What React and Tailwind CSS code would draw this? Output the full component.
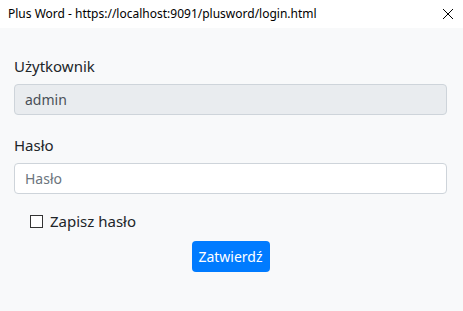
export default function App() {
  return (
    <div className="w-[463px] h-[311px] flex flex-col bg-[#f8f9fa]" style={{ fontFamily: '"Noto Sans", "Open Sans", sans-serif' }}>
      <div className="h-[28px] bg-white flex items-center justify-between pl-[8px] pr-[9px] shrink-0">
        <span className="text-[12px] text-black leading-none">Plus Word - https://localhost:9091/plusword/login.html</span>
        <svg width="12" height="12" viewBox="0 0 12 12" className="text-black">
          <path d="M1 1 L11 11 M11 1 L1 11" stroke="currentColor" strokeWidth="1" fill="none" />
        </svg>
      </div>
      <div className="flex flex-col px-[14px] pr-[16px] pt-[26px]">
        <label className="text-[15px] text-[#212529] leading-[24px]">Użytkownik</label>
        <div className="mt-[6px] h-[31px] rounded-[4px] border border-[#ced4da] bg-[#e9ecef] flex items-center px-[10px] text-[14px] text-[#495057]">admin</div>
        <label className="mt-[18px] text-[15px] text-[#212529] leading-[24px]">Hasło</label>
        <div className="mt-[6px] h-[31px] rounded-[4px] border border-[#ced4da] bg-white flex items-center px-[10px] text-[14px] text-[#6c757d]">Hasło</div>
        <div className="mt-[15px] flex items-center pl-[16px] gap-[7px]">
          <div className="w-[13px] h-[13px] border border-[#333] bg-white"></div>
          <span className="text-[15px] text-[#212529] leading-[24px]">Zapisz hasło</span>
        </div>
        <div className="flex justify-center mt-[8px]">
          <button className="w-[78px] h-[31px] rounded-[4px] bg-[#007bff] text-white text-[14px] flex items-center justify-center">Zatwierdź</button>
        </div>
      </div>
    </div>
  );
}
